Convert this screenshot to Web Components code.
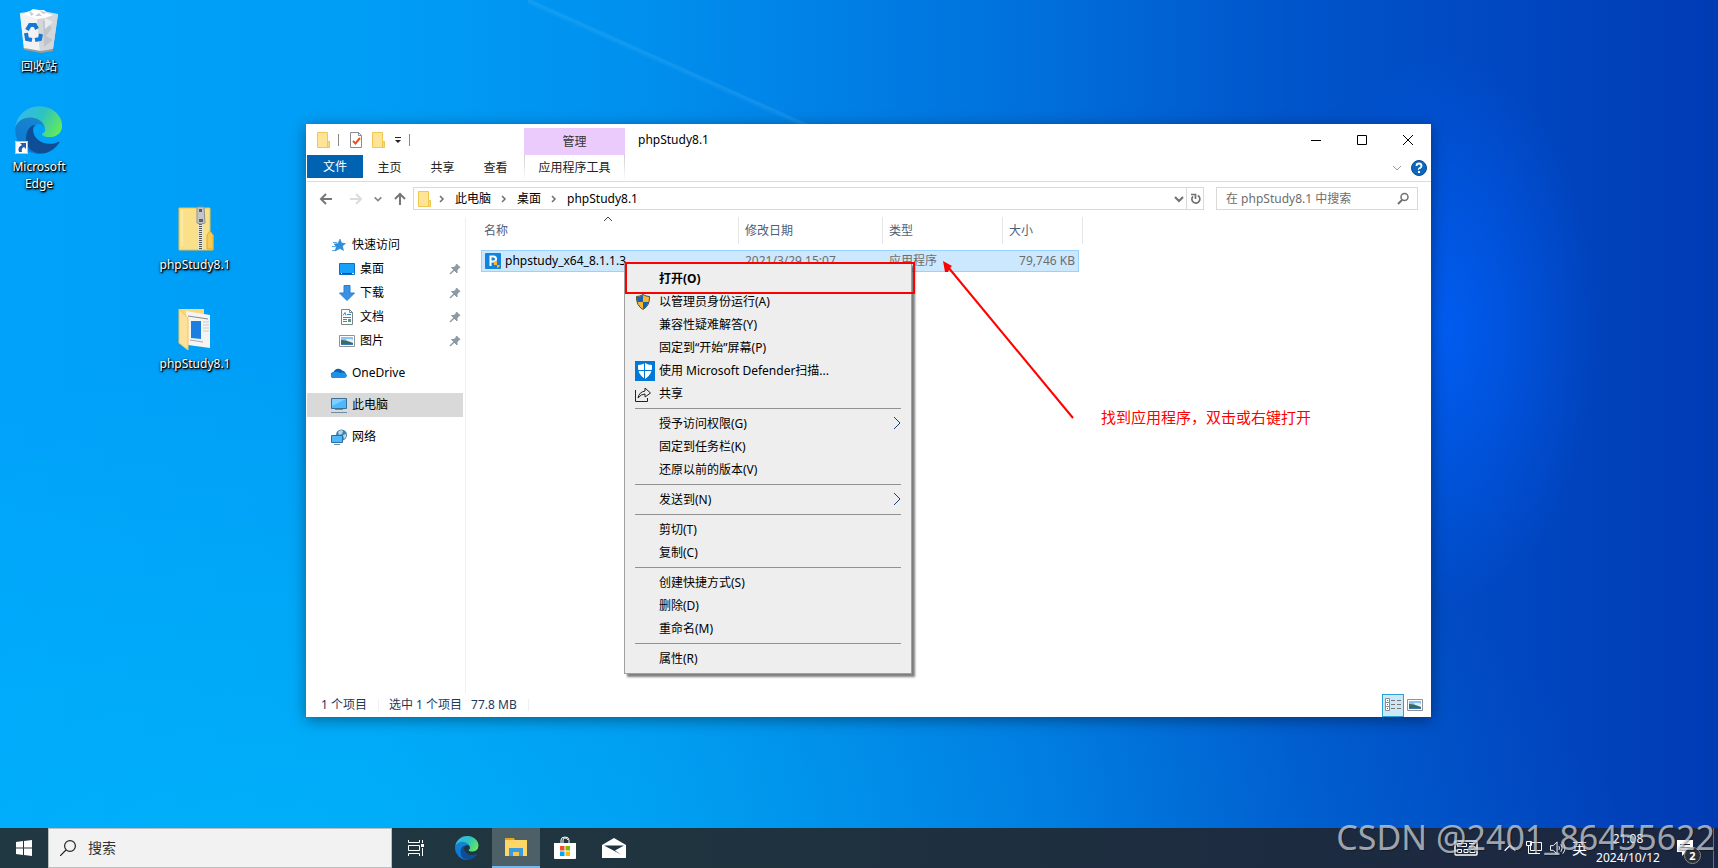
<!DOCTYPE html>
<html lang="zh-CN">
<head>
<meta charset="UTF-8">
<meta name="viewport" content="width=device-width, initial-scale=1">
<title>phpStudy8.1</title>
<style>
    html, body {
        margin: 0;
        height: 100%;
        overflow: hidden;
    }
    body {
        font: 12px/18px "Noto Sans", "Noto Sans CJK SC", sans-serif;
        color: #000;
    }
</style>
</head>
<body>
<desk-top></desk-top>

<script>
const ICONS = {
    recycle: `<svg viewBox="0 0 48 48">
        <path d="M5 7l4 36 17 3 12-3 5-35-20-4z" fill="#dfe3e6" opacity=".9"/>
        <path d="M5 7l17 4 3 35-16-3z" fill="#f1f2f3"/><path d="M22 11l21-3-5 35-13 3z" fill="#d3d7da"/>
        <path d="M28 14l9 8-6 8 7 4-9 7z" fill="#bfc5ca"/><path d="M30 12l8 4-8 7z" fill="#e9ebec"/>
        <path d="M8 8l7-3 3-2 6 1 5 0 3 3 6 2-8 3-8 1z" fill="#fff"/><path d="M14 5l5 3-3 2zM24 4l4 4 4-1M20 10l4-3 3 3z" fill="#c9cdd0"/>
        <path d="M9 42l17 3 12-2v2l-12 2-16-3z" fill="#9b9b9b"/>
        <g fill="none" stroke="#1678d4" stroke-width="4"><path d="M12 24l3-5 5 0 2 4"/><path d="M11 27l1 6 5 1"/><path d="M20 34l5-1 1-5"/></g></svg>`,
    edge: `<svg viewBox="4 4 257 257"><defs>
        <linearGradient id="a" x1="0" y1="0" x2="1" y2="0"><stop offset="0" stop-color="#0c4f98"/><stop offset="1" stop-color="#134c90"/></linearGradient>
        <linearGradient id="b" x1=".6" y1="0" x2=".2" y2="1"><stop offset="0" stop-color="#1b86cc"/><stop offset="1" stop-color="#0677d7"/></linearGradient>
        <linearGradient id="c" x1="0" y1=".3" x2="1" y2=".7"><stop offset="0" stop-color="#35b8f1"/><stop offset=".5" stop-color="#2ec3c0"/><stop offset="1" stop-color="#66eb56"/></linearGradient></defs>
        <path fill="url(#b)" d="M110.3 246.3A79.2 79.2 0 0 1 87.6 225 80.7 80.7 0 0 1 117.1 104.9c3.1-1.5 8.5-4.1 15.5-4a32.4 32.4 0 0 1 25.7 13 31.9 31.9 0 0 1 6.4 18.7c0-.2 24.5-79.6-80-79.6-43.9 0-80 41.7-80 78.2a130.2 130.2 0 0 0 12.1 56 128 128 0 0 0 156.4 67.1 75.6 75.6 0 0 1-62.8-8z"/>
        <path fill="url(#a)" d="M235.7 195.5a93.7 93.7 0 0 1-10.5 4.7 101.9 101.9 0 0 1-35.9 6.4c-47.3 0-88.5-32.5-88.5-74.3a31.5 31.5 0 0 1 16.3-27.4c-42.8 1.8-53.8 46.4-53.8 72.5 0 73.9 68.1 81.4 82.8 81.4 7.9 0 19.8-2.3 27-4.6l1.3-.4A128.3 128.3 0 0 0 241 201.1a4 4 0 0 0-5.3-5.6z"/>
        <path fill="url(#c)" d="M152.3 148.9c-.8 1-3.3 2.5-3.3 5.7 0 2.6 1.7 5.1 4.7 7.2 14.4 10 41.5 8.7 41.6 8.7a59.6 59.6 0 0 0 30.3-8.4 61.4 61.4 0 0 0 30.4-52.9c.3-22.4-8-37.3-11.3-43.9C223.3 24.4 178.4 4.7 132.7 4.7A128 128 0 0 0 4.7 131c.5-36.5 36.8-66 80-66 3.5 0 23.5.3 42 10 16.3 8.6 24.9 19 30.9 29.2 6.2 10.7 7.3 24.2 7.3 29.5s-2.7 13.3-12.6 15.2z"/></svg>`,
    shortcut: `<svg viewBox="0 0 13 13"><path d="M0 0h13v13H0z" fill="#fff"/><path d="M.5.500h12v12H.5z" fill="none" stroke="#c4c4c4"/><path d="M5 2h6v6L9 6q-3 1-2 5H4q-2-5 3-7z" fill="#2a5ba8"/></svg>`,
    zip: `<svg viewBox="0 0 48 48">
        <path d="M8 4h31v24l3 3v15H8z" fill="#fbe08a" stroke="#e9c14a"/><path d="M36 31l3-4 3 4v14h-6z" fill="#f6cb57" stroke="#e0ae33"/>
        <path d="M11 6v37" stroke="#fff3c4"/><path d="M27 4h5v41h-5z" fill="#e8e3cf"/>
        <path d="M29.500 20v26" stroke="#555" stroke-width="3" stroke-dasharray="1 1"/>
        <path d="M26 3h7l1 16q-4 2-8 0z" fill="#c3c6c8" stroke="#8f9294"/><path d="M28 5h3v3h-3zM28 15h4v3h-4z" fill="#5d5f61"/></svg>`,
    folderOpen: `<svg viewBox="0 0 48 48">
        <path d="M8 6h25v30H8z" fill="#fbd77b"/><path d="M15 8l24 4v33l-22-3z" fill="#f4f4f2"/>
        <path d="M17 13l20 3" stroke="#8a8a8a"/><path d="M20 18h10v18l-10-1z" fill="#1c7fdf"/>
        <path d="M32 19h6M32 22h6M32 25h6M32 28h6" stroke="#cacaca"/><path d="M19 37l13 2" stroke="#aaa"/>
        <path d="M8 6l9 9v32l-9-7z" fill="#fde09a" stroke="#f1c75f"/></svg>`,
    folder: `<svg viewBox="0 0 16 16"><path d="M1.500.500h10v9h2v6h-12z" fill="#ffe497" stroke="#eec851"/><path d="M11.500 9.500h2v6h-2z" fill="#f9d974" stroke="#eec851"/></svg>`,
    docCheck: `<svg viewBox="0 0 16 16"><path d="M2.500.500h8l3 3v12h-11z" fill="#fff" stroke="#8c8c94"/><path d="M10.500.500v3h3" fill="none" stroke="#8c8c94"/><path d="M5 9l2.500 2.500L12 6" fill="none" stroke="#e8521d" stroke-width="2"/></svg>`,
    quickMore: `<svg viewBox="0 0 8 8"><path d="M1 1.500h6" stroke="#222"/><path d="M1 4h6l-3 3z" fill="#222"/></svg>`,
    min: `<svg viewBox="0 0 12 12"><path d="M1 6.500h10" stroke="#000"/></svg>`,
    max: `<svg viewBox="0 0 12 12"><path d="M1.500 1.500h9v9h-9z" fill="none" stroke="#000"/></svg>`,
    close: `<svg viewBox="0 0 12 12"><path d="M1 1l10 10M11 1L1 11" stroke="#000"/></svg>`,
    down: `<svg viewBox="0 0 12 12"><path d="M2 4l4 4 4-4" fill="none" stroke="currentColor" stroke-width="var(--stroke, 1)"/></svg>`,
    upThin: `<svg viewBox="0 0 12 12"><path d="M2 8l4-4 4 4" fill="none" stroke="currentColor"/></svg>`,
    crumb: `<svg viewBox="0 0 12 12"><path d="M4 3l3 3-3 3" fill="none" stroke="#6e6e6e" stroke-width="1.500"/></svg>`,
    right: `<svg viewBox="0 0 16 16"><path d="M8 1l6 6-6 6" fill="none" stroke="#1d3d6e"/></svg>`,
    back: `<svg viewBox="0 0 16 16"><path d="M14 8H3M8 3L3 8l5 5" fill="none" stroke="#777" stroke-width="2"/></svg>`,
    forward: `<svg viewBox="0 0 16 16"><path d="M2 8h11M8 3l5 5-5 5" fill="none" stroke="#dcdcdc" stroke-width="2"/></svg>`,
    up: `<svg viewBox="0 0 16 16"><path d="M8 14V3M3 8l5-5 5 5" fill="none" stroke="#777" stroke-width="2"/></svg>`,
    refresh: `<svg viewBox="0 0 16 16"><path d="M10.800 4.600A4 4 0 1 1 6 5.300" fill="none" stroke="#707070" stroke-width="1.700"/><path d="M4 3.500h4.500V8" fill="none" stroke="#707070" stroke-width="1.700"/></svg>`,
    find: `<svg viewBox="0 0 14 14"><circle cx="8.500" cy="5" r="3.500" fill="none" stroke="#707070" stroke-width="1.500"/><path d="M6 8l-4 4" stroke="#707070" stroke-width="2"/></svg>`,
    help: `<svg viewBox="0 0 16 16"><circle cx="8" cy="8" r="7.500" fill="#0c67bd" stroke="#0a4c8e"/><path d="M5.500 6q0-2.500 2.500-2.500T10.500 6Q10.500 7 9 8T8 9.500" fill="none" stroke="#fff" stroke-width="1.800"/><path d="M7 11h2v2H7z" fill="#fff"/></svg>`,
    star: `<svg viewBox="0 0 16 16"><path d="M9 2l1.500 4 4 .5-3 2.500 1 4.500L9 11.500 4 14l1.500-4.500L3 7l4-.5z" fill="#2b8fe0" stroke="#1f7cc8" stroke-width=".5"/><path d="M2 5.500h4M1 9.500h4M1 13.500h3" stroke="#5aa9e8"/></svg>`,
    screen: `<svg viewBox="0 0 16 16"><path d="M.5 2.500h15v11H.5z" fill="#19a0fa" stroke="#0a72c4"/><path d="M1 12.500h14" stroke="#054f92"/><path d="M2 12.500h1m10 0h2" stroke="#fff"/></svg>`,
    download: `<svg viewBox="0 0 16 16"><path d="M5 .5h6V8h4.500L8 15.500.5 8H5z" fill="#3a92e6" stroke="#2b7ccb"/></svg>`,
    doc: `<svg viewBox="0 0 16 16"><path d="M2.500.500h8l3 3v12h-11z" fill="#fff" stroke="#7d8489"/><path d="M10.500.500v3h3" fill="none" stroke="#7d8489"/><path d="M4 6.500l2-3 1 3M8 5.500h4M4 8.500h8M4 10.500h4M4 12.500h4" fill="none" stroke="#2f8ac9"/><path d="M9 10h3v3H9z" fill="#5a9a84"/></svg>`,
    picture: `<svg viewBox="0 0 16 16"><path d="M.5 2.500h15v11H.5z" fill="#fff" stroke="#8d9397"/><path d="M2 4h12v8H2z" fill="#8cc2f5"/><path d="M7 6l5 0 2 1v3H9z" fill="#e2f0fa"/><path d="M2 7q5 0 12 3v2H2z" fill="#35705f"/><path d="M2 11h12v1H2z" fill="#3c78b5"/></svg>`,
    cloud: `<svg viewBox="0 0 16 16"><path d="M3 13a3 3 0 0 1-.5-6A5 5 0 0 1 11 5.500a4 4 0 0 1 2.500 7z" fill="#0f5fb5"/><path d="M4 13q-4 0-4-3 0-2.500 3-3 4-1 6 1 5-1.500 7 2 0 3-3 3z" fill="#1d93e8"/></svg>`,
    computer: `<svg viewBox="0 0 16 16"><path d="M.5 1.500h15v10H.5z" fill="#4db8fb" stroke="#3b6f96"/><path d="M1 2h14L1 9z" fill="#7fd0ff"/><path d="M4 12.500h8M0 15.500h16" stroke="#6d8ba3"/></svg>`,
    network: `<svg viewBox="0 0 16 16"><circle cx="10.500" cy="6" r="5.500" fill="#4483ad"/><path d="M7 3q3-3 5-1l-1 3-3 1zM12 6l3-1 0 3-2 2z" fill="#b7d7ea"/><path d="M.5 6.500h11v7H.5z" fill="#4db8fb" stroke="#2f6f9f"/><path d="M3 15.500h6" stroke="#6d8ba3"/></svg>`,
    pin: `<svg viewBox="0 0 12 12"><path d="M7.500 1L11 4.500 9.500 5 8 7v3L2.500 4.500H5L7 2.500z" fill="#8b99a3" stroke="#8b99a3"/><path d="M5 7l-4 4" stroke="#8b99a3" stroke-width="1.500"/></svg>`,
    app: `<svg viewBox="0 0 16 16"><rect width="16" height="16" rx="1" fill="#1284dd"/><path d="M5.500 13V3.500h3a2.500 2.500 0 0 1 0 5h-3" fill="none" stroke="#fff" stroke-width="2"/><path d="M12 8l3 1v3q-1 3-3 3-3-1-3-3V9z" fill="#2878c8"/><path d="M12 8l-3 1v3h3zM12 12h3q-1 3-3 3z" fill="#f3ba3c"/></svg>`,
    shield: `<svg viewBox="0 0 16 16"><path d="M8 .5q3 2 6.500 2 .5 9-6.500 13Q1 11.500 1.500 2.500 5 2.500 8 .5z" fill="#f7b92b" stroke="#4a4a44"/><path d="M8 1q-3 2-6 2-.2 3 .6 5H8z" fill="#1b62b5"/><path d="M8 8h5.500q-1 4.500-5.500 7z" fill="#1b62b5"/></svg>`,
    defender: `<svg viewBox="0 0 20 20"><path d="M0 0h20v20H0z" fill="#0078d7"/><path d="M10 2q3 2 7 2 1 9-7 14Q2 13 3 4q4 0 7-2z" fill="#fff"/><path d="M9.500 2v16M3 9.500h14" stroke="#0078d7"/></svg>`,
    share: `<svg viewBox="0 0 16 16"><path d="M.5 4v11.500h12V12M3 12q1-6 7-7V2l5.500 5L10 11V8q-4 0-7 4z" fill="none" stroke="#222"/></svg>`,
    details: `<svg viewBox="0 0 16 16"><path d="M.5 1.500h4v4h-4zM.5 5.500h4v4h-4zM.5 9.500h4v4h-4z" fill="#fff" stroke="#8b8b8b"/><path d="M6 3.500h4M12 3.500h4M6 7.500h4M12 7.500h4M6 11.500h4M12 11.500h4" stroke="#777"/><path d="M2 3h1v1H2zM2 7h1v1H2z" fill="#28c"/><path d="M2 11h1v1H2z" fill="#e22"/></svg>`,
    windows: `<svg viewBox="0 0 16 16"><path d="M0 2l7-1v6.500H0zM8 .9L16 0v7.500H8zM0 8.500h7V15l-7-1zM8 8.500h8V16l-8-1z" fill="#fff"/></svg>`,
    search: `<svg viewBox="0 0 16 16"><circle cx="10" cy="6" r="5.400" fill="none" stroke="#222" stroke-width="1.200"/><path d="M6 10l-6 6" stroke="#222" stroke-width="1.200"/></svg>`,
    taskView: `<svg viewBox="0 0 16 16"><path d="M.5 0v2.500h11V0M.5 16v-2.500h11V16M.5 5.500h11v5H.5zM14.500 0v3M14.500 8v8" fill="none" stroke="#fff"/><path d="M13 4h3v3h-3z" fill="#fff"/></svg>`,
    explorer: `<svg viewBox="0 0 24 24"><path d="M1 3h9l1 2v4H1z" fill="#e8a317"/><path d="M1 5h22v16H1z" fill="#ffd766"/><path d="M5 21v-8h14v8h-4v-4H9v4z" fill="#3a9be0"/><path d="M9 17h6v4H9z" fill="#fbc748"/></svg>`,
    store: `<svg viewBox="0 0 24 24"><path d="M8 7V4q0-3 4-3t4 3v3M10 7V4q0-2 2-2t3 2" fill="none" stroke="#fff"/><path d="M1 7h22v15q0 1-1 1H2q-1 0-1-1z" fill="#fff"/><path d="M7 10h4.500v4.500H7z" fill="#f25022"/><path d="M12.500 10H17v4.500h-4.500z" fill="#7fba00"/><path d="M7 15.500h4.500V20H7z" fill="#00a4ef"/><path d="M12.500 15.500H17V20h-4.500z" fill="#ffb900"/></svg>`,
    mail: `<svg viewBox="0 0 24 24"><path d="M0 9l12-7 12 7v13H0z" fill="#fff"/><path d="M2 9.500h20l-9 5 6 4z" fill="#20343f"/></svg>`,
    keyboard: `<svg viewBox="0 0 24 16"><rect x="1" y="1" width="22" height="14" rx="1" fill="none" stroke="#fff" stroke-width="1.500"/><path d="M3.500 3.500h9v3h-9zM3.500 9.500h4v3h-4zM10 9.500h4v3h-4zM15 3.500h6M15 6.500h6v6h-5V9M17 9.500h3" fill="none" stroke="#fff"/></svg>`,
    tower: `<svg viewBox="0 0 16 16"><path d="M4.500 2.500h11v8h-11zM10 10.500v3M6 13.500h8M.5 1.500h5v4h-5zM2.500 5.500v8h4" fill="none" stroke="#fff"/></svg>`,
    volume: `<svg viewBox="0 0 17 16"><path d="M.5 5.500h3l4-4v13l-4-4h-3z" fill="none" stroke="#fff"/><path d="M9.500 6q1 2 0 4M11.500 4q3 4 0 8M13.500 2q5 6 0 12" fill="none" stroke="#fff"/></svg>`,
    notify: `<svg viewBox="0 0 16 16"><path d="M0 0h16v12H9l-4 4v-4H0z" fill="#fff"/><path d="M3 4.500h10M3 7.500h10" stroke="#1c2840"/></svg>`,
};

class UiIcon extends HTMLElement {
    constructor() {
        super();
        this.attachShadow({mode: "open"});
    }
    connectedCallback() {
        this.shadowRoot.innerHTML = `
        <style>
            :host {
                display: block;
                flex: none;
                width: 16px;
                height: 16px;
            }
            svg {
                display: block;
                width: 100%;
                height: 100%;
            }
        </style>
        ${ICONS[this.getAttribute("name")]}`;
        this.shadowRoot.querySelector("svg").setAttribute("aria-hidden", "true");
    }
}

class DesktopIcon extends HTMLElement {
    constructor() {
        super();
        this.attachShadow({mode: "open"});
    }
    connectedCallback() {
        this.shadowRoot.innerHTML = `
        <style>
            :host {
                display: block;
                width: 76px;
            }
            button {
                display: flex;
                flex-direction: column;
                align-items: center;
                gap: 4px;
                width: 100%;
                padding: 0;
                border: 0;
                background: none;
                color: #fff;
                font: inherit;
                line-height: 17px;
                text-shadow: 1px 1px 2px #000, 1px 1px 1px #000, 0 1px 3px #000;
            }
            .image {
                position: relative;
            }
            .image > ui-icon {
                width: 48px;
                height: 48px;
            }
            .image .link {
                position: absolute;
                left: 0;
                bottom: 0;
                width: 13px;
                height: 13px;
            }
        </style>
        <button>
            <span class="image">
                <ui-icon name="${this.getAttribute("icon")}"></ui-icon>
                ${this.hasAttribute("link") ? '<ui-icon class="link" name="shortcut"></ui-icon>' : ""}
            </span>
            <span><slot></slot></span>
        </button>`;
    }
}

class NavItem extends HTMLElement {
    constructor() {
        super();
        this.attachShadow({mode: "open"});
    }
    connectedCallback() {
        this.shadowRoot.innerHTML = `
        <style>
            :host {
                display: block;
                margin-right: 2px;
            }
            :host([group]) {
                margin-top: 8px;
            }
            :host([current]) {
                background: #d9d9d9;
            }
            a {
                display: flex;
                align-items: center;
                gap: 5px;
                height: 24px;
                padding: 0 2px 0 24px;
                color: #000;
                text-decoration: none;
            }
            :host([pinned]) a {
                padding-left: 32px;
            }
            span {
                flex: 1;
            }
            .pin {
                width: 12px;
                height: 12px;
            }
        </style>
        <a href="#">
            <ui-icon name="${this.getAttribute("icon")}"></ui-icon>
            <span><slot></slot></span>
            ${this.hasAttribute("pinned") ? '<ui-icon class="pin" name="pin"></ui-icon>' : ""}
        </a>`;
    }
}

class FileTable extends HTMLElement {
    constructor() {
        super();
        this.attachShadow({mode: "open"});
    }
    connectedCallback() {
        this.shadowRoot.innerHTML = `
        <style>
            :host {
                display: block;
            }
            table {
                table-layout: fixed;
                width: 602px;
                border-spacing: 0;
            }
            th, td {
                box-sizing: border-box;
                padding: 0 6px;
                font-weight: normal;
                text-align: left;
            }
            th {
                position: relative;
                height: 27px;
                color: #4c607a;
                border-right: 1px solid #e5e5e5;
            }
            th.size {
                border-right: 0;
            }
            th.edge {
                padding: 0;
            }
            th.name, td.name {
                padding-left: 3px;
            }
            .sort {
                position: absolute;
                top: -4px;
                left: calc(50% - 8px);
                width: 12px;
                height: 12px;
                color: #444;
            }
            .gap td {
                height: 6px;
            }
            .row td {
                height: 22px;
                background: #cce8ff;
                border: solid #99d1ff;
                border-width: 1px 0;
                color: #6d6d6d;
            }
            .row td.name {
                color: #000;
                border-left-width: 1px;
            }
            .row td.size {
                padding-right: 3px;
                border-right-width: 1px;
                text-align: right;
            }
            .row td.edge {
                background: none;
                border: 0;
            }
            .file {
                display: flex;
                align-items: center;
                gap: 4px;
            }
        </style>
        <table>
            <colgroup><col width="258"><col width="144"><col width="120"><col width="76"><col width="4"></colgroup>
            <thead>
                <tr>
                    <th class="name">名称<ui-icon class="sort" name="upThin"></ui-icon></th>
                    <th>修改日期</th>
                    <th>类型</th>
                    <th class="size">大小</th>
                    <th class="edge"></th>
                </tr>
            </thead>
            <tbody>
                <tr class="gap"><td colspan="5"></td></tr>
                <tr class="row">
                    <td class="name"><span class="file"><ui-icon name="app"></ui-icon>phpstudy_x64_8.1.1.3</span></td>
                    <td>2021/3/29 15:07</td>
                    <td>应用程序</td>
                    <td class="size">79,746 KB</td>
                    <td class="edge"></td>
                </tr>
            </tbody>
        </table>`;
    }
}

class ExplorerWindow extends HTMLElement {
    constructor() {
        super();
        this.attachShadow({mode: "open"});
    }
    connectedCallback() {
        this.shadowRoot.innerHTML = `
        <style>
            :host {
                display: flex;
                flex-direction: column;
                box-sizing: border-box;
                padding-left: 1px;
                background: #fff;
                box-shadow: 0 3px 14px rgb(0 0 0 / 40%);
            }
            button {
                display: flex;
                align-items: center;
                justify-content: center;
                padding: 0;
                border: 0;
                background: none;
                color: #222;
                font: inherit;
            }
            header, .ribbon, .address, .crumbs, .search, .status, .quick, .controls {
                display: flex;
                align-items: center;
            }
            header {
                height: 31px;
            }
            .quick {
                width: 209px;
                padding-left: 8px;
                color: #777;
            }
            .quick > ui-icon {
                margin-left: 1px;
            }
            .quick i {
                width: 1px;
                height: 12px;
                background: #888;
            }
            .quick i:first-of-type {
                margin: 0 9px 0 6px;
            }
            .quick button + button {
                margin-left: 7px;
            }
            .quick .more {
                width: 8px;
                height: 8px;
            }
            .quick i:last-of-type {
                margin-left: 7px;
            }
            .manage {
                align-self: flex-end;
                width: 101px;
                height: 27px;
                background: #ebcbfb;
                color: #333;
                line-height: 27px;
                text-align: center;
            }
            h1 {
                flex: 1;
                margin: 0 0 0 13px;
                font: inherit;
            }
            .controls {
                align-self: stretch;
            }
            .controls button {
                width: 46px;
                height: 30px;
            }
            .controls ui-icon {
                width: 12px;
                height: 12px;
            }
            .ribbon {
                height: 26px;
                align-items: flex-start;
                border-bottom: 1px solid #dadbdc;
                padding-right: 4px;
            }
            .ribbon > button {
                width: 53px;
                height: 25px;
            }
            .ribbon > .file {
                width: 56px;
                height: 23px;
                background: #0063b1;
                color: #fff;
            }
            .ribbon > .tools {
                width: 101px;
                margin-left: 2px;
                border: 1px solid;
                border-width: 0 1px;
                border-image: linear-gradient(#ccc, #fff) 1;
            }
            .ribbon .right {
                display: flex;
                flex: 1;
                align-items: center;
                justify-content: flex-end;
                gap: 8px;
                height: 26px;
            }
            .ribbon .right button {
                color: #999;
            }
            .ribbon .right .fold {
                width: 12px;
                height: 12px;
            }
            .address {
                padding: 5px 13px 7px 11px;
                gap: 12px;
            }
            .moves {
                display: flex;
                align-items: center;
                gap: 9px;
                margin-right: -7px;
                --stroke: 2;
            }
            .moves button {
                color: #888;
            }
            .moves .history {
                width: 10px;
                height: 10px;
            }
            .moves .group {
                display: flex;
                gap: 14px;
            }
            .crumbs, .search {
                box-sizing: border-box;
                height: 23px;
                border: 1px solid #d9d9d9;
            }
            .crumbs {
                flex: 1;
                padding-left: 3px;
            }
            .crumbs nav {
                display: flex;
                align-items: center;
                gap: 7px;
                flex: 1;
            }
            .crumbs .step {
                width: 12px;
                height: 12px;
            }
            .crumbs nav > ui-icon:first-child {
                margin-right: -4px;
            }
            .crumbs a {
                color: #000;
                text-decoration: none;
            }
            .crumbs .drop {
                width: 14px;
                height: 100%;
                color: #707070;
                --stroke: 2;
            }
            .crumbs .drop ui-icon {
                width: 12px;
                height: 12px;
            }
            .crumbs .again {
                box-sizing: border-box;
                width: 17px;
                height: 100%;
                border-left: 1px solid #d9d9d9;
            }
            .search {
                width: 202px;
                padding: 0 7px 0 9px;
            }
            .search input {
                flex: 1;
                min-width: 0;
                padding: 0;
                border: 0;
                outline: 0;
                background: none;
                font: inherit;
            }
            .search input::placeholder {
                color: #6d6d6d;
                opacity: 1;
            }
            .search ui-icon {
                width: 14px;
                height: 14px;
            }
            main {
                display: flex;
                flex: 1;
            }
            aside {
                box-sizing: border-box;
                width: 159px;
                padding-top: 16px;
                border-right: 1px solid #f0f0f0;
            }
            file-table {
                flex: 1;
                padding-left: 15px;
            }
            .status {
                height: 24px;
                padding: 0 8px 0 14px;
                color: #1e395b;
            }
            .status span {
                padding-right: 11px;
                margin-right: 10px;
                border-right: 1px solid #f0f0f0;
                line-height: 12px;
            }
            .status b {
                margin-left: 9px;
                font-weight: normal;
            }
            .status .views {
                display: flex;
                flex: 1;
                align-items: center;
                justify-content: flex-end;
                gap: 3px;
            }
            .status .on {
                box-sizing: border-box;
                width: 22px;
                height: 23px;
                background: #cce8f6;
                border: 1px solid #2f9fd8;
            }
        </style>
        <header>
            <div class="quick">
                <ui-icon name="folder"></ui-icon><i></i>
                <button aria-label="属性"><ui-icon name="docCheck"></ui-icon></button>
                <button aria-label="新建文件夹"><ui-icon name="folder"></ui-icon></button>
                <button aria-label="自定义快速访问工具栏"><ui-icon class="more" name="quickMore"></ui-icon></button><i></i>
            </div>
            <div class="manage">管理</div>
            <h1>phpStudy8.1</h1>
            <div class="controls">
                <button aria-label="最小化"><ui-icon name="min"></ui-icon></button>
                <button aria-label="最大化"><ui-icon name="max"></ui-icon></button>
                <button aria-label="关闭"><ui-icon name="close"></ui-icon></button>
            </div>
        </header>
        <div class="ribbon">
            <button class="file">文件</button>
            <button>主页</button>
            <button>共享</button>
            <button>查看</button>
            <button class="tools">应用程序工具</button>
            <div class="right">
                <button aria-label="展开功能区"><ui-icon class="fold" name="down"></ui-icon></button>
                <button aria-label="帮助"><ui-icon name="help"></ui-icon></button>
            </div>
        </div>
        <div class="address">
            <div class="moves">
                <div class="group">
                    <button aria-label="后退"><ui-icon name="back"></ui-icon></button>
                    <button aria-label="前进"><ui-icon name="forward"></ui-icon></button>
                </div>
                <button aria-label="最近浏览的位置"><ui-icon class="history" name="down"></ui-icon></button>
                <button aria-label="上移"><ui-icon name="up"></ui-icon></button>
            </div>
            <div class="crumbs">
                <nav>
                    <ui-icon name="folder"></ui-icon>
                    <ui-icon class="step" name="crumb"></ui-icon>
                    <a href="#">此电脑</a>
                    <ui-icon class="step" name="crumb"></ui-icon>
                    <a href="#">桌面</a>
                    <ui-icon class="step" name="crumb"></ui-icon>
                    <a href="#">phpStudy8.1</a>
                </nav>
                <button class="drop" aria-label="以前的位置"><ui-icon name="down"></ui-icon></button>
                <button class="again" aria-label="刷新"><ui-icon name="refresh"></ui-icon></button>
            </div>
            <label class="search">
                <input type="text" aria-label="搜索" placeholder="在 phpStudy8.1 中搜索">
                <ui-icon name="find"></ui-icon>
            </label>
        </div>
        <main>
            <aside>
                <nav-item icon="star">快速访问</nav-item>
                <nav-item icon="screen" pinned>桌面</nav-item>
                <nav-item icon="download" pinned>下载</nav-item>
                <nav-item icon="doc" pinned>文档</nav-item>
                <nav-item icon="picture" pinned>图片</nav-item>
                <nav-item icon="cloud" group>OneDrive</nav-item>
                <nav-item icon="computer" group current>此电脑</nav-item>
                <nav-item icon="network" group>网络</nav-item>
            </aside>
            <file-table></file-table>
        </main>
        <div class="status">
            <span>1 个项目</span>
            <span>选中 1 个项目<b>77.8 MB</b></span>
            <div class="views">
                <button class="on" aria-label="详细信息"><ui-icon name="details"></ui-icon></button>
                <button aria-label="大缩略图"><ui-icon name="picture"></ui-icon></button>
            </div>
        </div>`;
    }
}

class MenuEntry extends HTMLElement {
    constructor() {
        super();
        this.attachShadow({mode: "open"});
    }
    connectedCallback() {
        const icon = this.getAttribute("icon");
        this.shadowRoot.innerHTML = `
        <style>
            :host {
                display: block;
            }
            button {
                display: grid;
                grid-template-columns: 24px 1fr 16px;
                align-items: center;
                width: 100%;
                height: 23px;
                padding: 0 6px 0 7px;
                border: 0;
                background: none;
                color: #000;
                font: inherit;
                text-align: left;
            }
            :host([default]) button {
                font-weight: bold;
            }
            .large {
                width: 20px;
                height: 20px;
            }
        </style>
        <button role="menuitem">
            <span>${icon ? `<ui-icon name="${icon}" class="${icon === "defender" ? "large" : ""}"></ui-icon>` : ""}</span>
            <span><slot></slot></span>
            ${this.hasAttribute("more") ? '<ui-icon name="right"></ui-icon>' : ""}
        </button>`;
    }
}

class ContextMenu extends HTMLElement {
    constructor() {
        super();
        this.attachShadow({mode: "open"});
    }
    connectedCallback() {
        this.setAttribute("role", "menu");
        this.shadowRoot.innerHTML = `
        <style>
            :host {
                display: block;
                box-sizing: border-box;
                padding: 3px;
                background: #eee;
                border: 1px solid #a0a0a0;
                box-shadow: 3px 3px 2px rgb(0 0 0 / 50%);
            }
            ::slotted(hr) {
                height: 1px;
                margin: 3px 7px;
                border: 0;
                background: #919191;
            }
        </style>
        <slot></slot>`;
    }
}

class TaskBar extends HTMLElement {
    constructor() {
        super();
        this.attachShadow({mode: "open"});
    }
    connectedCallback() {
        this.shadowRoot.innerHTML = `
        <style>
            :host {
                display: flex;
                height: 40px;
                background: linear-gradient(90deg, #203841, #1f343f 40%, #1d2b40 75%, #1b2741);
                color: #fff;
            }
            button {
                display: flex;
                align-items: center;
                justify-content: center;
                width: 48px;
                padding: 0;
                border: 0;
                background: none;
                color: #fff;
                font: inherit;
            }
            label {
                display: flex;
                align-items: center;
                gap: 12px;
                box-sizing: border-box;
                width: 344px;
                padding: 0 11px;
                background: #f2f2f2;
                border: 1px solid #b9bec0;
            }
            input {
                flex: 1;
                min-width: 0;
                padding: 0;
                border: 0;
                outline: 0;
                background: none;
                font: inherit;
                font-size: 14px;
            }
            input::placeholder {
                color: #333;
                opacity: 1;
            }
            .apps {
                display: flex;
                flex: 1;
                gap: 1px;
                margin-left: 3px;
            }
            .apps ui-icon {
                width: 24px;
                height: 24px;
            }
            .apps .open {
                box-sizing: border-box;
                background: #4e6067;
                border-bottom: 2px solid #76b9ed;
            }
            .tray {
                display: flex;
                align-items: center;
            }
            .tray button {
                width: auto;
            }
            .tray .keys {
                width: 24px;
                margin-right: 24px;
            }
            .tray .tight {
                width: 16px;
                margin-right: 8px;
            }
            .tray .ime {
                font-size: 15px;
                margin: 0 7px 0 6px;
            }
            time {
                display: block;
                line-height: 19px;
                width: 68px;
                font-size: 12px;
                text-align: center;
            }
            .notice {
                position: relative;
                margin: 0 20px 0 15px;
            }
            .notice b {
                position: absolute;
                left: 7px;
                top: 7px;
                width: 15px;
                height: 15px;
                border: 1px solid #888;
                border-radius: 50%;
                background: #2b2f38;
                font-size: 11px;
                line-height: 15px;
                text-align: center;
            }
            .peek {
                width: 4px;
                align-self: stretch;
                border-left: 1px solid #68718a;
            }
        </style>
        <button aria-label="开始"><ui-icon name="windows"></ui-icon></button>
        <label><ui-icon name="search"></ui-icon><input type="text" aria-label="搜索" placeholder="搜索"></label>
        <button aria-label="任务视图"><ui-icon name="taskView"></ui-icon></button>
        <div class="apps">
            <button aria-label="Microsoft Edge"><ui-icon name="edge"></ui-icon></button>
            <button class="open" aria-label="文件资源管理器"><ui-icon name="explorer"></ui-icon></button>
            <button aria-label="Microsoft Store"><ui-icon name="store"></ui-icon></button>
            <button aria-label="邮件"><ui-icon name="mail"></ui-icon></button>
        </div>
        <div class="tray">
            <button aria-label="触摸键盘"><ui-icon class="keys" name="keyboard"></ui-icon></button>
            <button aria-label="显示隐藏的图标"><ui-icon class="tight" name="upThin"></ui-icon></button>
            <button aria-label="网络"><ui-icon class="tight" name="tower"></ui-icon></button>
            <button aria-label="音量"><ui-icon name="volume"></ui-icon></button>
            <button class="ime">英</button>
            <time>21:08<br>2024/10/12</time>
            <button class="notice" aria-label="通知"><ui-icon name="notify"></ui-icon><b>2</b></button>
            <div class="peek"></div>
        </div>`;
    }
}

class DeskTop extends HTMLElement {
    constructor() {
        super();
        this.attachShadow({mode: "open"});
    }
    connectedCallback() {
        this.shadowRoot.innerHTML = `
        <style>
            :host {
                position: relative;
                display: flex;
                flex-direction: column;
                justify-content: flex-end;
                height: 100%;
                overflow: hidden;
                background:
                    linear-gradient(to top right, transparent 48%, rgb(120 210 255 / 16%) 50%, transparent 51%) 37% 0 / 290px 130px no-repeat,
                    radial-gradient(ellipse 9% 32% at 84% 38%, rgb(0 98 255 / 75%), transparent),
                    radial-gradient(ellipse 75% 60% at 20% 100%, rgb(0 205 255 / 38%), transparent),
                    linear-gradient(90deg, #00a2fa 0%, #009df5 22%, #0090ee 37%, #0070dc 60%, #0055cb 75%, #0048c2 87%, #003bb4 100%);
            }
            desktop-icon, explorer-window, context-menu, .mark, .arrow, .note, .watermark {
                position: absolute;
            }
            explorer-window {
                inset: 124px 287px 151px 306px;
            }
            context-menu {
                left: 624px;
                top: 263px;
                width: 288px;
            }
            .mark {
                left: 625px;
                top: 262px;
                width: 286px;
                height: 28px;
                border: 2px solid #f00;
            }
            .arrow {
                left: 940px;
                top: 258px;
                width: 140px;
                height: 164px;
            }
            .note {
                left: 1101px;
                top: 406px;
                margin: 0;
                color: #f00;
                font-size: 15px;
                line-height: 22px;
            }
            .watermark {
                right: 3px;
                bottom: 7px;
                color: rgb(222 224 230 / 70%);
                font: 34px/48px "Noto Sans", sans-serif;
                text-shadow: 1px 1px 1px rgb(0 0 0 / 35%);
                white-space: nowrap;
                pointer-events: none;
            }
        </style>
        <desktop-icon icon="recycle" style="left: 1px; top: 6px">回收站</desktop-icon>
        <desktop-icon icon="edge" link style="left: 1px; top: 106px">Microsoft Edge</desktop-icon>
        <desktop-icon icon="zip" style="left: 157px; top: 204px">phpStudy8.1</desktop-icon>
        <desktop-icon icon="folderOpen" style="left: 157px; top: 303px">phpStudy8.1</desktop-icon>
        <explorer-window></explorer-window>
        <context-menu>
            <menu-entry default>打开(O)</menu-entry>
            <menu-entry icon="shield">以管理员身份运行(A)</menu-entry>
            <menu-entry>兼容性疑难解答(Y)</menu-entry>
            <menu-entry>固定到“开始”屏幕(P)</menu-entry>
            <menu-entry icon="defender">使用 Microsoft Defender扫描...</menu-entry>
            <menu-entry icon="share">共享</menu-entry>
            <hr>
            <menu-entry more>授予访问权限(G)</menu-entry>
            <menu-entry>固定到任务栏(K)</menu-entry>
            <menu-entry>还原以前的版本(V)</menu-entry>
            <hr>
            <menu-entry more>发送到(N)</menu-entry>
            <hr>
            <menu-entry>剪切(T)</menu-entry>
            <menu-entry>复制(C)</menu-entry>
            <hr>
            <menu-entry>创建快捷方式(S)</menu-entry>
            <menu-entry>删除(D)</menu-entry>
            <menu-entry>重命名(M)</menu-entry>
            <hr>
            <menu-entry>属性(R)</menu-entry>
        </context-menu>
        <div class="mark"></div>
        <svg class="arrow" viewBox="0 0 140 164" aria-hidden="true">
            <path d="M133 160L8 9" stroke="#f00" stroke-width="2"/>
            <path d="M3 3l9 5-2 2-2 4-3 0z" fill="#f00"/>
        </svg>
        <p class="note">找到应用程序，双击或右键打开</p>
        <task-bar></task-bar>
        <div class="watermark">CSDN @2401_86455622</div>`;
    }
}

customElements.define("ui-icon", UiIcon);
customElements.define("desktop-icon", DesktopIcon);
customElements.define("nav-item", NavItem);
customElements.define("file-table", FileTable);
customElements.define("explorer-window", ExplorerWindow);
customElements.define("menu-entry", MenuEntry);
customElements.define("context-menu", ContextMenu);
customElements.define("task-bar", TaskBar);
customElements.define("desk-top", DeskTop);
</script>
</body>
</html>
